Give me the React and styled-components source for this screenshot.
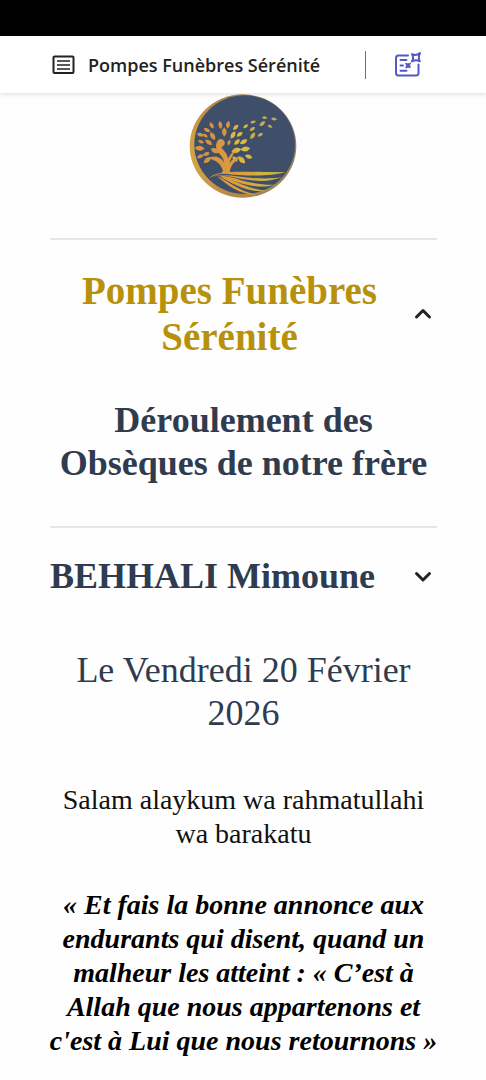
import React, { useState } from 'react'
import styled, { createGlobalStyle } from 'styled-components'

const GlobalStyle = createGlobalStyle`
    * {
        box-sizing: border-box;
    }

    body {
        margin: 0;
        background: #fefefe;
        color: #111111;
        font-family: "Liberation Serif", "Times New Roman", serif;
    }

    h1, h2, p {
        margin: 0;
    }
`;

const StatusBar = styled.div`
    height: 36px;
    background: #000000;
`;

const Header = styled.header`
    display: flex;
    align-items: center;
    height: 57px;
    padding: 0 64px 0 52px;
    background: #ffffff;
    box-shadow: 0 2px 4px rgba(0, 0, 0, 0.1);
`;

const HeaderTitle = styled.span`
    flex: 1;
    margin-left: 13px;
    color: #222222;
    font-family: "Open Sans", "Noto Sans", sans-serif;
    font-size: 18px;
    font-weight: 600;
    white-space: nowrap;
`;

const Divider = styled.span`
    width: 1px;
    height: 28px;
    margin-right: 28px;
    background: #6e6e6e;
`;

const IconButton = styled.button`
    display: flex;
    padding: 0;
    border: 0;
    background: none;
    color: ${props => props.$color || '#222222'};
    cursor: pointer;
`;

const Page = styled.main`
    padding: 0 49px 24px 50px;
    text-align: center;
`;

const LogoWrapper = styled.div`
    display: flex;
    justify-content: center;
    padding-bottom: 39px;
`;

const Section = styled.section`
    border-top: 2px solid #e6e6e6;
    padding-top: ${props => props.$top}px;
`;

const SectionHead = styled.div`
    display: flex;
    align-items: center;
    justify-content: space-between;
`;

const Title = styled.h1`
    flex: 1;
    color: #b8910c;
    font-size: 39px;
    line-height: 46px;
`;

const Subtitle = styled.h2`
    padding: 39px 0 41px;
    color: #2f3b4f;
    font-size: 36px;
    line-height: 43px;
`;

const Name = styled.h2`
    color: #2f3b4f;
    font-size: 36px;
    line-height: 43px;
    white-space: nowrap;
`;

const Toggle = styled(IconButton)`
    margin: 0 5px;
`;

const DateText = styled.p`
    padding: 51px 0 48px;
    color: #2f3b4f;
    font-size: 36px;
    line-height: 43px;
`;

const Text = styled.p`
    font-size: 28px;
    line-height: 34px;
`;

const Quote = styled.blockquote`
    margin: 37px -6px 0;
    color: #000000;
    font-size: 28px;
    font-style: italic;
    font-weight: bold;
    line-height: 34px;
`;

const OutlineIcon = () => (
    <svg width="23" height="20" viewBox="0 0 23 20" fill="none" stroke="currentColor" strokeWidth="2">
        <rect x="1.5" y="1.5" width="20" height="16.5" rx="1" />
        <path d="M5 6h13M5 10h13M5 14h13" strokeWidth="1.6" />
    </svg>
)

const SummaryIcon = () => (
    <svg width="28" height="28" viewBox="0 0 28 28" fill="none" stroke="currentColor" strokeWidth="2" strokeLinecap="round" strokeLinejoin="round">
        <path d="M14 4.500H4.500Q2 4.500 2 7V22Q2 24.500 4.500 24.500H22Q24.500 24.500 24.500 22V13.500" />
        <path d="M6.500 9H12.500M6.500 14.500H9M6.500 19.800H12.500" strokeWidth="1.9" />
        <path d="M18 3.200Q21.800 5.400 26 2Q23.800 6.400 25.800 10.300Q22 8 18 10.500Q20.200 6.500 18 3.200Z" strokeWidth="2" />
        <path d="M12 12.500Q14 13.800 16.300 12Q15 14.500 16.300 16.500Q14 15.500 11.800 17Q13 14.500 12 12.500Z" fill="currentColor" strokeWidth="1" />
    </svg>
)

const Chevron = ({ up }) => (
    <svg width="18" height="12" viewBox="0 0 18 12" fill="none" stroke="currentColor" strokeWidth="3" strokeLinecap="round" strokeLinejoin="round">
        <path d={up ? 'M2.500 9L9 2.500L15.500 9' : 'M2.500 2.500L9 9L15.500 2.500'} />
    </svg>
)

// x, y, length, angle
const leaves = [
    [96, 112, 11, 60], [122, 111, 12, 80], [145, 110, 12, 100], [82, 126, 11, 30],
    [134, 132, 14, 90], [168, 118, 11, 135], [62, 140, 11, 20], [99, 144, 14, 60],
    [180, 139, 11, 145], [160, 141, 13, 120], [77, 143, 9, 35], [64, 161, 10, 20],
    [87, 163, 13, 35], [172, 162, 12, 135], [192, 161, 13, 150], [60, 181, 15, 5],
    [170, 187, 15, 165], [197, 183, 15, 170], [80, 198, 11, 340], [106, 188, 14, 25],
    [62, 205, 11, 335], [83, 216, 14, 320], [105, 211, 9, 320], [186, 215, 15, 45],
    [207, 206, 12, 20], [166, 213, 11, 50], [123, 168, 12, 70], [148, 164, 9, 110],
    [198, 115, 9, 145], [220, 102, 9, 165], [218, 123, 10, 145], [219, 143, 12, 125],
    [242, 140, 9, 150], [248, 107, 11, 140], [255, 89, 8, 5], [283, 93, 9, 10],
    [271, 115, 8, 25],
]

const Logo = () => (
    <svg width="110" height="106" viewBox="28 15 330 318" role="img" aria-label="Pompes Funèbres Sérénité">
        <defs>
            <linearGradient id="ring" x1="0" y1="0.6" x2="1" y2="0.4">
                <stop offset="0" stopColor="#d5a449" />
                <stop offset="0.3" stopColor="#b78748" />
                <stop offset="1" stopColor="#8c8565" />
            </linearGradient>
            <linearGradient id="gold" gradientUnits="userSpaceOnUse" x1="60" y1="0" x2="320" y2="0">
                <stop offset="0" stopColor="#d8913c" />
                <stop offset="0.5" stopColor="#dc9f40" />
                <stop offset="0.75" stopColor="#cdb544" />
                <stop offset="1" stopColor="#b69e48" />
            </linearGradient>
        </defs>
        <ellipse cx="190" cy="174" rx="160" ry="155" fill="url(#ring)" />
        <ellipse cx="195" cy="170" rx="151" ry="148" fill="#404f69" />
        <g fill="url(#gold)">
            {leaves.map(([x, y, size, angle]) => (
                <path
                    key={`${x}-${y}`}
                    fill={x < 155 ? '#d69340' : x < 215 ? '#ddb744' : '#c5ae4b'}
                    d={`M${-size} 0Q0 ${-size} ${size} 0Q0 ${size} ${-size} 0Z`}
                    transform={`translate(${x} ${y}) rotate(${angle})`}
                />
            ))}
            <path d="M125 257C137 238 137 218 124 203C111 187 104 177 113 160C118 150 131 151 135 162C137 171 131 176 125 175C121 181 141 188 145 212C150 200 160 190 170 182C159 202 152 213 149 227C158 210 172 206 186 207C163 219 152 233 150 255Z" />
            <path d="M131 251C124 226 107 212 82 212C107 199 130 209 137 232Z" />
            <path d="M88 270C118 242 190 254 318 252C268 268 180 262 135 257C115 257 102 263 88 270Z" />
            <path d="M103 265C150 252 220 282 308 267C250 292 177 270 140 264C126 262 114 263 103 265Z" />
            <path d="M120 263C170 264 200 292 285 290C235 306 174 285 120 263Z" />
            <path d="M118 264C160 272 196 302 258 308C215 316 165 292 118 264Z" />
            <path d="M112 265C150 280 172 308 228 320C185 322 145 294 112 265Z" />
        </g>
    </svg>
)

const App = () => {
    const [introOpen, setIntroOpen] = useState(true)
    const [detailsOpen, setDetailsOpen] = useState(false)

    return (
        <>
            <GlobalStyle />
            <StatusBar />
            <Header>
                <IconButton aria-label="Sommaire">
                    <OutlineIcon />
                </IconButton>
                <HeaderTitle>Pompes Funèbres Sérénité</HeaderTitle>
                <Divider />
                <IconButton $color="#5258c8" aria-label="Résumé">
                    <SummaryIcon />
                </IconButton>
            </Header>
            <Page>
                <LogoWrapper>
                    <Logo />
                </LogoWrapper>
                <Section $top={28}>
                    <SectionHead>
                        <Title>Pompes Funèbres Sérénité</Title>
                        <Toggle
                            aria-label="Afficher ou masquer l'introduction"
                            aria-expanded={introOpen}
                            onClick={() => setIntroOpen(!introOpen)}
                        >
                            <Chevron up={introOpen} />
                        </Toggle>
                    </SectionHead>
                    {introOpen && <Subtitle>Déroulement des Obsèques de notre frère</Subtitle>}
                </Section>
                <Section $top={27}>
                    <SectionHead>
                        <Name>BEHHALI Mimoune</Name>
                        <Toggle
                            aria-label="Afficher ou masquer les détails"
                            aria-expanded={detailsOpen}
                            onClick={() => setDetailsOpen(!detailsOpen)}
                        >
                            <Chevron up={detailsOpen} />
                        </Toggle>
                    </SectionHead>
                    <DateText>Le Vendredi 20 Février 2026</DateText>
                    <Text>Salam alaykum wa rahmatullahi wa barakatu</Text>
                    <Quote>
                        « Et fais la bonne annonce aux endurants qui disent, quand un malheur les
                        atteint : « C’est à Allah que nous appartenons et c'est à Lui que nous
                        retournons »
                    </Quote>
                </Section>
            </Page>
        </>
    )
}

export default App
